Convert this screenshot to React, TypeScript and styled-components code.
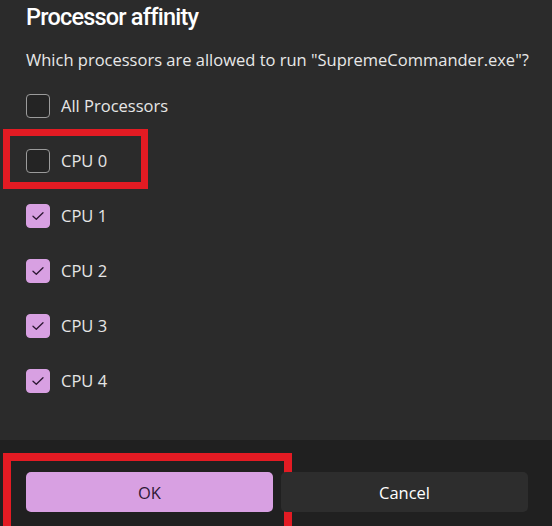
import styled, { createGlobalStyle } from 'styled-components';

const GlobalStyle = createGlobalStyle`
    html, body {
        margin: 0;
        padding: 0;
        background-color: #2b2b2b;
        overflow: hidden;
    }
    * {
        box-sizing: border-box;
    }
`

const Dialog = styled.div`
    width: 552px;
    height: 526px;
    display: flex;
    flex-direction: column;
    background-color: #2b2b2b;
    font-family: "Open Sans", "Noto Sans", sans-serif;
    color: #ffffff;
    overflow: hidden;
`

const Content = styled.div`
    flex: 1;
    padding: 1px 20px 0 26px;
    display: flex;
    flex-direction: column;
`

const Title = styled.h1`
    margin: 0;
    font-family: Roboto, "Open Sans", sans-serif;
    font-size: 23.5px;
    line-height: 32px;
    font-weight: 500;
    letter-spacing: -0.8px;
    color: #ffffff;
`

const Subtitle = styled.p`
    margin: 16px 0 7px;
    font-size: 16.5px;
    line-height: 22px;
    white-space: nowrap;
    color: #e8e8e8;
`

const List = styled.div`
    display: flex;
    flex-direction: column;
`

const Row = styled.label`
    position: relative;
    height: 55px;
    display: flex;
    align-items: center;
    gap: 11px;
    font-size: 16.5px;
    color: #e6e6e6;
`

const Box = styled.span<{ $checked: boolean }>`
    width: 24px;
    height: 24px;
    border-radius: 4px;
    display: flex;
    align-items: center;
    justify-content: center;
    background-color: ${p => (p.$checked ? '#d8a0e2' : '#242424')};
    border: 1px solid ${p => (p.$checked ? '#d8a0e2' : '#9b9b9b')};
`

const Highlight = styled.span<{ $left: number; $top: number; $width: number; $height: number; $w: number }>`
    position: absolute;
    left: ${p => p.$left}px;
    top: ${p => p.$top}px;
    width: ${p => p.$width}px;
    height: ${p => p.$height}px;
    border: ${p => p.$w}px solid #e31b23;
    pointer-events: none;
`

const Footer = styled.div`
    height: 86px;
    background-color: #202020;
    padding: 32px 24px 14px 26px;
    display: grid;
    grid-template-columns: 1fr 1fr;
    gap: 8px;
`

const ButtonWrap = styled.div`
    position: relative;
`

const Button = styled.button<{ $primary?: boolean }>`
    width: 100%;
    height: 40px;
    border: none;
    border-radius: 5px;
    font-family: "Open Sans", "Noto Sans", sans-serif;
    font-size: 16.5px;
    background-color: ${p => (p.$primary ? '#d8a0e2' : '#2d2d2d')};
    color: ${p => (p.$primary ? '#2e1836' : '#ffffff')};
`

const Check = () => (
    <svg width="16" height="16" viewBox="0 0 16 16" fill="none">
        <path d="M3 8.3 L6.3 11.3 L13 4.8" stroke="#2a1630" strokeWidth="1.3" strokeLinecap="round" strokeLinejoin="round" />
    </svg>
);

const items = [
    { label: 'All Processors', checked: false },
    { label: 'CPU 0', checked: false, marked: true },
    { label: 'CPU 1', checked: true },
    { label: 'CPU 2', checked: true },
    { label: 'CPU 3', checked: true },
    { label: 'CPU 4', checked: true },
];

const App = () => {
    return (
        <>
            <GlobalStyle />
            <Dialog>
                <Content>
                    <Title>Processor affinity</Title>
                    <Subtitle>Which processors are allowed to run "SupremeCommander.exe"?</Subtitle>
                    <List>
                        {items.map(item => (
                            <Row key={item.label}>
                                <Box $checked={item.checked}>{item.checked && <Check />}</Box>
                                {item.label}
                                {item.marked && <Highlight $left={-23} $top={-4} $width={145} $height={60} $w={7} />}
                            </Row>
                        ))}
                    </List>
                </Content>
                <Footer>
                    <ButtonWrap>
                        <Button $primary>OK</Button>
                        <Highlight $left={-23} $top={-19} $width={289} $height={90} $w={8} />
                    </ButtonWrap>
                    <ButtonWrap>
                        <Button>Cancel</Button>
                    </ButtonWrap>
                </Footer>
            </Dialog>
        </>
    );
}

export default App;
